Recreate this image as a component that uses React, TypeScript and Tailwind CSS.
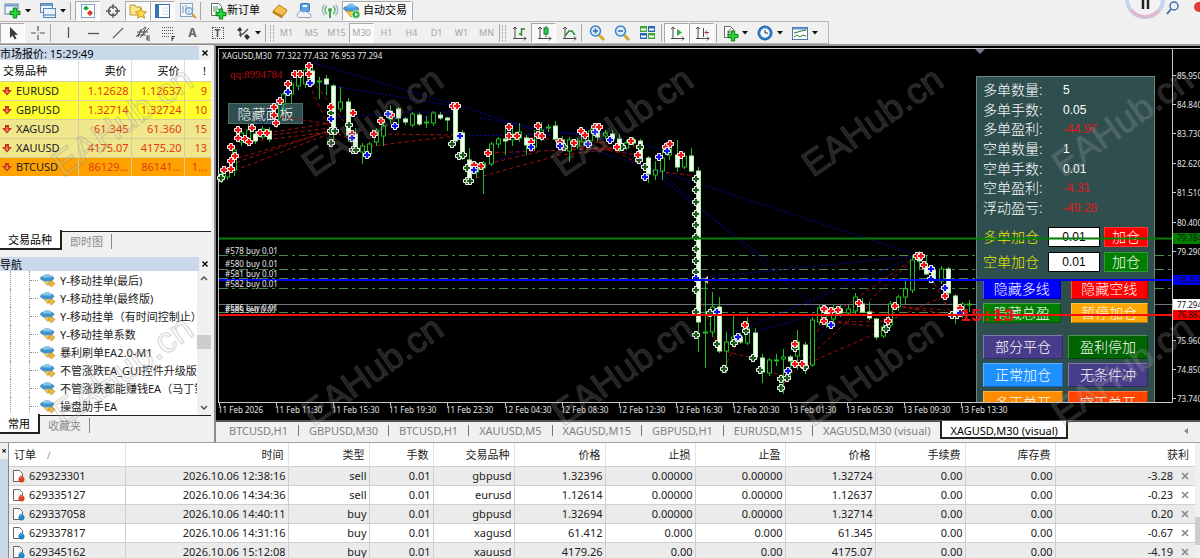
import type { ReactNode } from 'react'

type Side = 'sell' | 'buy'

interface Quote {
  symbol: string
  bid: string
  ask: string
  spread: string
  tone: string
}

interface Order {
  id: string
  time: string
  side: Side
  lots: string
  symbol: string
  open: string
  sl: string
  tp: string
  price: string
  profit: string
}

const quotes: Quote[] = [
  { symbol: 'EURUSD', bid: '1.12628', ask: '1.12637', spread: '9', tone: 'bg-[#ffff2e]' },
  { symbol: 'GBPUSD', bid: '1.32714', ask: '1.32724', spread: '10', tone: 'bg-[#ffff2e]' },
  { symbol: 'XAGUSD', bid: '61.345', ask: '61.360', spread: '15', tone: 'bg-[#f0e68c]' },
  { symbol: 'XAUUSD', bid: '4175.07', ask: '4175.20', spread: '13', tone: 'bg-[#f0e68c]' },
  { symbol: 'BTCUSD', bid: '86129...', ask: '86141...', spread: '1...', tone: 'bg-[#ffa200]' },
]

const experts = [
  'Y-移动挂单(最后)',
  'Y-移动挂单(最终版)',
  'Y-移动挂单（有时间控制止）',
  'Y-移动挂单系数',
  '暴利刷单EA2.0-M1',
  '不管涨跌EA_GUI控件升级版',
  '不管涨跌都能赚钱EA（马丁策略）',
  '操盘助手EA',
]

const orders: Order[] = [
  { id: '629323301', time: '2026.10.06 12:38:16', side: 'sell', lots: '0.01', symbol: 'gbpusd', open: '1.32396', sl: '0.00000', tp: '0.00000', price: '1.32724', profit: '-3.28' },
  { id: '629335127', time: '2026.10.06 14:34:36', side: 'sell', lots: '0.01', symbol: 'eurusd', open: '1.12614', sl: '0.00000', tp: '0.00000', price: '1.12637', profit: '-0.23' },
  { id: '629337058', time: '2026.10.06 14:40:11', side: 'buy', lots: '0.01', symbol: 'gbpusd', open: '1.32694', sl: '0.00000', tp: '0.00000', price: '1.32714', profit: '0.20' },
  { id: '629337817', time: '2026.10.06 14:31:16', side: 'buy', lots: '0.01', symbol: 'xagusd', open: '61.412', sl: '0.000', tp: '0.000', price: '61.345', profit: '-0.67' },
  { id: '629345162', time: '2026.10.06 15:12:08', side: 'buy', lots: '0.01', symbol: 'xauusd', open: '4179.26', sl: '0.00', tp: '0.00', price: '4175.07', profit: '-4.19' },
]

const chartTabs = ['BTCUSD,H1', 'GBPUSD,M30', 'BTCUSD,H1', 'XAUUSD,M5', 'XAGUSD,M15', 'GBPUSD,H1', 'EURUSD,M15', 'XAGUSD,M30 (visual)']

const stats = [
  { label: '多单数量:', value: '5' },
  { label: '多单手数:', value: '0.05' },
  { label: '多单盈利:', value: '-44.97', loss: true },
  { label: '空单数量:', value: '1' },
  { label: '空单手数:', value: '0.01' },
  { label: '空单盈利:', value: '-4.31', loss: true },
  { label: '浮动盈亏:', value: '-49.28', loss: true },
]

const timeLabels = [
  '11 Feb 2026', '11 Feb 11:30', '11 Feb 15:30', '11 Feb 19:30', '11 Feb 23:30', '12 Feb 04:30', '12 Feb 08:30',
  '12 Feb 12:30', '12 Feb 16:30', '12 Feb 20:30', '13 Feb 01:30', '13 Feb 05:30', '13 Feb 09:30', '13 Feb 13:30',
]

const priceLabels: [string, number][] = [
  ['85.950', 76], ['84.840', 105], ['83.730', 134], ['82.620', 164], ['81.510', 193], ['80.400', 223],
  ['79.290', 252], ['75.960', 341], ['74.850', 370], ['73.740', 399],
]

// x, high, low, body top, body bottom, 1 = falling bar (filled)
const candles: number[][] = [
  [221, 169, 183, 174, 180, 0], [227, 167, 180, 171, 177, 0], [234, 146, 176, 150, 170, 0], [241, 128, 146, 133, 142, 0],
  [248, 124, 144, 130, 139, 0], [255, 131, 144, 134, 141, 1], [262, 126, 139, 129, 137, 0], [269, 127, 142, 131, 139, 1],
  [276, 104, 128, 106, 121, 0], [283, 92, 112, 94, 104, 0], [291, 80, 104, 84, 94, 0], [298, 70, 90, 73, 86, 0],
  [305, 66, 88, 70, 84, 0], [312, 64, 86, 71, 83, 1], [319, 77, 99, 81, 82, 0], [326, 75, 95, 79, 84, 1],
  [333, 84, 144, 86, 128, 1], [340, 87, 112, 102, 109, 0], [348, 98, 142, 102, 135, 1], [355, 128, 153, 134, 152, 1],
  [362, 143, 164, 146, 152, 0], [369, 142, 158, 144, 154, 0], [376, 128, 146, 131, 142, 0], [383, 120, 146, 126, 136, 0],
  [390, 105, 124, 111, 119, 0], [398, 107, 124, 109, 118, 1], [405, 117, 125, 119, 122, 1], [412, 112, 127, 114, 125, 0],
  [419, 113, 126, 115, 124, 1], [426, 116, 128, 122, 123, 0], [433, 111, 126, 113, 123, 0], [440, 112, 120, 115, 118, 1],
  [447, 117, 131, 118, 120, 1], [455, 104, 144, 107, 141, 1], [462, 130, 160, 133, 157, 1], [469, 148, 182, 160, 180, 1],
  [476, 162, 178, 164, 172, 0], [483, 161, 194, 163, 168, 0], [491, 142, 166, 144, 164, 0], [498, 137, 148, 139, 144, 0],
  [505, 129, 155, 139, 141, 1], [512, 127, 146, 134, 140, 0], [519, 123, 142, 132, 138, 0], [526, 135, 155, 138, 145, 1],
  [534, 130, 151, 140, 147, 0], [541, 122, 141, 130, 138, 0], [548, 124, 132, 127, 128, 0], [555, 121, 142, 126, 139, 1],
  [562, 136, 151, 140, 149, 1], [569, 137, 162, 140, 151, 0], [577, 138, 149, 141, 146, 0], [583, 131, 146, 134, 142, 0],
  [590, 129, 147, 131, 141, 0], [597, 124, 141, 128, 137, 1], [605, 130, 139, 133, 136, 0], [612, 130, 142, 134, 139, 1],
  [619, 134, 152, 139, 147, 1], [626, 140, 150, 143, 148, 0], [633, 137, 146, 140, 143, 1], [640, 139, 161, 141, 159, 1],
  [648, 156, 183, 158, 174, 1], [655, 161, 180, 170, 175, 0], [662, 150, 180, 158, 171, 0], [669, 141, 160, 145, 155, 0],
  [677, 140, 172, 155, 167, 1], [684, 152, 169, 156, 167, 0], [691, 148, 172, 156, 171, 1], [698, 167, 352, 171, 322, 1],
  [705, 280, 368, 332, 333, 0], [712, 292, 337, 307, 332, 0], [719, 297, 353, 307, 351, 1], [726, 332, 373, 342, 351, 0],
  [733, 315, 346, 337, 342, 0], [740, 333, 344, 337, 342, 1], [747, 317, 345, 328, 343, 0], [755, 328, 360, 333, 357, 1],
  [762, 354, 383, 358, 372, 1], [769, 358, 376, 360, 373, 0], [776, 354, 366, 360, 361, 0], [783, 349, 394, 357, 359, 0],
  [790, 355, 380, 357, 361, 1], [797, 330, 370, 342, 356, 0], [805, 342, 374, 345, 369, 1], [812, 317, 367, 320, 365, 0],
  [819, 305, 325, 308, 322, 0], [826, 306, 328, 309, 315, 1], [833, 305, 323, 309, 319, 0], [840, 305, 317, 309, 313, 1],
  [848, 305, 316, 309, 313, 0], [855, 293, 314, 297, 311, 0], [862, 298, 313, 304, 312, 1], [869, 302, 320, 312, 318, 1],
  [876, 318, 340, 319, 337, 1], [883, 324, 338, 327, 336, 0], [890, 301, 328, 304, 325, 0], [898, 295, 311, 297, 307, 0],
  [905, 278, 304, 289, 297, 0], [912, 256, 293, 260, 290, 0], [919, 251, 270, 254, 261, 1], [926, 256, 275, 267, 274, 1],
  [933, 266, 283, 270, 280, 1], [941, 266, 284, 269, 281, 0], [948, 267, 296, 269, 293, 1], [955, 294, 324, 296, 315, 1],
  [962, 302, 318, 304, 313, 0], [969, 300, 312, 304, 305, 0],
]

const redMarks: number[][] = [
  [224, 170], [231, 161], [231, 147], [235, 156], [231, 169], [238, 130], [238, 138], [245, 139], [249, 142], [252, 128],
  [260, 133], [267, 133], [276, 123], [274, 107], [274, 115], [280, 101], [288, 84], [295, 74], [300, 74], [309, 66],
  [309, 74], [331, 107], [353, 113], [352, 134], [374, 134], [381, 121], [391, 115], [453, 106], [457, 106], [474, 165],
  [481, 166], [488, 153], [509, 127], [509, 136], [517, 136], [531, 142], [538, 126], [538, 135], [542, 136], [560, 142],
  [574, 143], [581, 131], [585, 135], [595, 127], [599, 127], [617, 147], [631, 141], [638, 155], [681, 155], [666, 147],
  [670, 144], [745, 325], [795, 344], [795, 364], [802, 364], [824, 309], [831, 311], [838, 310], [824, 321], [859, 303],
  [895, 306], [888, 321], [917, 256], [921, 256], [924, 265], [945, 296], [960, 308],
]

const blueMarks: number[][] = [
  [288, 92], [310, 83], [331, 119], [352, 138], [367, 155], [388, 114], [395, 126], [460, 136], [474, 170], [531, 147],
  [560, 146], [588, 144], [595, 132], [610, 140], [645, 177], [659, 157], [667, 151], [696, 278], [717, 312], [738, 337],
  [788, 371], [831, 325], [931, 269], [931, 279], [945, 288], [960, 313],
]

const greenMarks: number[][] = [
  [221, 178], [331, 113], [331, 131], [335, 131], [331, 143], [349, 125], [353, 150], [356, 150], [452, 144], [459, 156],
  [463, 155], [467, 168], [467, 181], [470, 181], [564, 147], [622, 147], [640, 147], [639, 160], [645, 167], [696, 179],
  [696, 190], [696, 202], [696, 214], [696, 225], [696, 237], [696, 249], [696, 261], [696, 272], [696, 290], [696, 312],
  [696, 335], [710, 313], [717, 344], [724, 369], [734, 343], [753, 358], [760, 370], [781, 379], [781, 388], [787, 378],
  [746, 331], [795, 348], [805, 367], [886, 329], [952, 315], [957, 315],
]

const markPath = 'M-1.5-3.500h3v2h2v3h-2v2h-3v-2h-2v-3h2z'

const redTrends =
  'M223 167L331 130M231 160L331 131M238 139L331 128M246 142L331 132M260 134L331 123M228 173L331 133M274 116L331 124M309 84L331 131M312 80L349 128M331 131L353 140M356 148L455 136M374 134L455 135M474 167L538 152M488 153L617 148M476 178L560 155L640 146M517 137L640 145M566 148L617 148M560 143L638 155M585 135L645 167M645 170L697 176M698 290L717 345M719 350L753 358M724 369L745 325M760 370L783 375M783 385L824 321M787 378L917 256M802 366L886 329M824 321L888 328M831 322L888 321M838 311L917 256M859 303L888 321M895 306L952 315M888 321L945 296M895 306L945 310M924 265L952 315'

const blueTrends =
  'M231 160L309 72M246 139L295 74M267 132L288 92M310 62L453 104M310 82L453 106M331 118L388 114M395 118L455 116M457 105L917 255M395 112L457 112M460 136L595 133M474 170L531 147M480 118L610 140M595 132L667 151M610 140L770 262M640 155L820 312M698 278L917 256M717 340L917 256M738 337L824 312M788 371L831 325M917 256L945 288M931 279L960 313'

const Svg = ({ children, size = 18 }: { children: ReactNode; size?: number }) => (
  <svg viewBox="0 0 18 18" width={size} height={size} fill="none" aria-hidden="true" className="shrink-0">
    {children}
  </svg>
)

const PlusShape = ({ x, y }: { x: number; y: number }) => (
  <path
    transform={`translate(${x} ${y})`}
    d="M-1.7-5h3.4v3.3h3.3v3.4h-3.3v3.3h-3.4v-3.3h-3.3v-3.4h3.3z"
    fill="#27d33a"
    stroke="#0b7d16"
  />
)

const Caret = () => (
  <svg viewBox="0 0 6 4" width="6" height="4" aria-hidden="true" className="shrink-0">
    <path d="M0 0h6L3 3.5z" fill="#111" />
  </svg>
)

const icons = {
  newChart: <Svg><rect x="1" y="2" width="13" height="10" fill="#eef4fb" stroke="#64809f" /><path d="M1 3.5h13" stroke="#6f9bc8" strokeWidth="2" /><PlusShape x={11} y={11} /></Svg>,
  profiles: <Svg><rect x="1.500" y="1.500" width="12" height="9" fill="#eaf3fc" stroke="#5b86b2" /><path d="M2 3h11" stroke="#6d9ccd" strokeWidth="2" /><rect x="4.500" y="6.500" width="12" height="9" fill="#eaf3fc" stroke="#5b86b2" /><path d="M5 13h11" stroke="#8fb4da" strokeWidth="2" /></Svg>,
  market: <Svg><rect x="2.500" y="2.500" width="13" height="13" fill="#fff" stroke="#7fa8d0" /><path d="M4 6.500l3-3 3 3-3 2z" fill="#18a838" /><path d="M8 11l3-3 3 3-3 3z" fill="#e33425" /></Svg>,
  crosshair: <Svg><circle cx="9" cy="9" r="4.500" stroke="#555" strokeWidth="1.500" /><path d="M9 2v5M9 11v5M2 9h5M11 9h5" stroke="#555" strokeWidth="1.300" /></Svg>,
  favourites: <Svg><path d="M1 3h5l1 2h5v8H1z" fill="#f8e58c" stroke="#b79a37" /><path d="M12 6l1.700 3.500 3.800.4-2.800 2.500.8 3.800L12 14.300l-3.500 1.900.8-3.800-2.800-2.500 3.800-.4z" fill="#ffd54a" stroke="#b8860b" strokeWidth=".8" /></Svg>,
  terminal: <Svg><rect x="1.500" y="2.500" width="14" height="13" fill="#fff" stroke="#3b71a8" /><rect x="2" y="3" width="3" height="12" fill="#2f74b5" /><path d="M8 6h6M8 9h6M8 12h6" stroke="#c9d8e8" /></Svg>,
  tester: <Svg><rect x="1.500" y="1.500" width="12" height="13" fill="#f3f7fb" stroke="#86a2bf" /><path d="M4 4v7M7 3v6M10 5v6" stroke="#7793ae" /><circle cx="10" cy="9" r="3.500" fill="#cfe4f9aa" stroke="#5d8fc4" /><path d="M13 12l4 4" stroke="#d79b2e" strokeWidth="2" /></Svg>,
  newOrder: <Svg><path d="M2.500 1.500h7l3 3v9h-10z" fill="#fff" stroke="#6b6b6b" /><path d="M4 5h5M4 7h6M4 9h4" stroke="#4b9a55" /><PlusShape x={12} y={12} /></Svg>,
  meta: <Svg><path d="M2 9l6-6 8 5-5 6z" fill="#f4c04a" stroke="#b07a12" /><path d="M2 9l9 5v2l-9-5z" fill="#c98a1b" stroke="#a26e10" strokeWidth=".6" /><path d="M11 14l5-6v2l-5 6z" fill="#dfa130" /></Svg>,
  cloud: <Svg><rect x="4.500" y="1.500" width="9" height="8" rx="1" fill="#5aa5ea" stroke="#3077b8" /><path d="M7 4h4" stroke="#fff" strokeWidth="2" /><path d="M2.500 15.500a2.500 2.500 0 010-4.500 3 3 0 015-1 3.500 3.500 0 015 1.500 2.500 2.500 0 012 4z" fill="#eef4fa" stroke="#8aa3bd" /></Svg>,
  signals: <Svg><circle cx="9" cy="8" r="2" fill="#3aa34c" /><path d="M9 9v7" stroke="#3aa34c" strokeWidth="2" /><path d="M6 12a5 5 0 010-8M12 12a5 5 0 000-8" stroke="#57b966" strokeWidth="1.500" /><path d="M3.500 13.500a8 8 0 010-11M14.500 13.500a8 8 0 000-11" stroke="#9db3c8" strokeWidth="1.300" /></Svg>,
  auto: <Svg><path d="M2 8l6 7 6-3 2-5z" fill="#f3c744" stroke="#b98d18" strokeWidth=".7" /><ellipse cx="8" cy="6.500" rx="7.500" ry="2.500" fill="#4b9edd" stroke="#2a74ae" strokeWidth=".7" /><path d="M4 5.500a4 4 0 018 0z" fill="#79bdec" /><circle cx="13" cy="12.500" r="4" fill="#25b33a" stroke="#fff" strokeWidth=".7" /><path d="M12 10.500l3 2-3 2z" fill="#fff" /></Svg>,
  cursor: <Svg><path d="M6 3v11l2.700-2.500 2 4 1.800-1-2-3.800H14z" fill="#3a3a3a" /></Svg>,
  cross: <Svg><path d="M9 2v5M9 11v5M2 9h5M11 9h5" stroke="#555" strokeWidth="1.200" /><path d="M9 9h1" stroke="#555" /></Svg>,
  vline: <Svg><path d="M9.500 3v11" stroke="#555" strokeWidth="1.300" /></Svg>,
  hline: <Svg><path d="M4 9.500h11" stroke="#555" strokeWidth="1.300" /></Svg>,
  trend: <Svg><path d="M4 14L14 4" stroke="#666" strokeWidth="1.200" /></Svg>,
  channel: <Svg><path d="M2 13L11 3M6 14L15 4M3 8h11M3 11h9M7 5l-3 8M12 3l-4 9" stroke="#555" /><path d="M13 12h3M13 14h3M13 16h3M13 12v4" stroke="#333" strokeWidth=".9" /></Svg>,
  fibo: <Svg><path d="M3 3.500h12M3 6.500h12M3 9.500h12M3 12.500h8" stroke="#555" strokeDasharray="1 1" /><path d="M13 12v5M13 12.500h3M13 14.500h2" stroke="#333" /></Svg>,
  arrows: <Svg><path d="M3 6l3-3 2 3-2 2zM10 12l3-2 3 3-3 3z" fill="#333" /><path d="M5 11l4-1 5-5M6 8l1 5" stroke="#444" strokeWidth="1.300" /></Svg>,
  bars: <Svg><path d="M5 3v12M3 5l2-2 2 2M3 14.500h13M14 12.500l2 2-2 2" stroke="#4b4b4b" /><path d="M11.500 4v8M9 10h2M12 5h3" stroke="#22862c" strokeWidth="1.400" /></Svg>,
  candles: <Svg><path d="M5 3v12M3 5l2-2 2 2M3 14.500h13M14 12.500l2 2-2 2" stroke="#4b4b4b" /><path d="M11 2v11" stroke="#14782a" /><rect x="9" y="4" width="4" height="6" fill="#29d04b" stroke="#14782a" /></Svg>,
  line: <Svg><path d="M5 3v12M3 5l2-2 2 2M3 14.500h13M14 12.500l2 2-2 2" stroke="#4b4b4b" /><path d="M5 12l4-5h3l3 4" stroke="#22862c" strokeWidth="1.300" /></Svg>,
  zoomIn: <Svg><path d="M11 11l5 5" stroke="#d8a62b" strokeWidth="3" /><circle cx="7.500" cy="7" r="5" fill="#d9ecfd" stroke="#3b83c8" strokeWidth="1.500" /><path d="M5 7h5M7.500 4.500v5" stroke="#2d6eb0" strokeWidth="1.500" /></Svg>,
  zoomOut: <Svg><path d="M11 11l5 5" stroke="#d8a62b" strokeWidth="3" /><circle cx="7.500" cy="7" r="5" fill="#d9ecfd" stroke="#3b83c8" strokeWidth="1.500" /><path d="M5 7h5" stroke="#2d6eb0" strokeWidth="1.500" /></Svg>,
  tile: <Svg><rect x="2" y="2" width="7" height="6" fill="#3ea935" /><rect x="10" y="2" width="7" height="6" fill="#2f62bd" /><rect x="2" y="9" width="7" height="6" fill="#2f62bd" /><rect x="10" y="9" width="7" height="6" fill="#3ea935" /><path d="M3 5.500h5M11 5.500h5M3 12.500h5M11 12.500h5" stroke="#fff" strokeWidth="2" /></Svg>,
  scroll: <Svg><path d="M5 3v12M3 5l2-2 2 2M3 14.500h13M14 12.500l2 2-2 2" stroke="#4b4b4b" /><path d="M9 5l5 3.500L9 12z" fill="#2fae45" /></Svg>,
  shift: <Svg><path d="M5 3v12M3 5l2-2 2 2M3 14.500h13M14 12.500l2 2-2 2M10.500 4v9" stroke="#4b4b4b" /><path d="M16 8.500h-4M14 6.500l-2 2 2 2" stroke="#a33" /></Svg>,
  indicators: <Svg><path d="M3.500 2.500h6l3 3v8h-9z" fill="#fff" stroke="#666" /><path d="M6 11c2 0 1-6 4-6M6 8h4" stroke="#555" /><PlusShape x={12} y={12} /></Svg>,
  periods: <Svg><circle cx="9" cy="9" r="7" fill="#2f7fd0" stroke="#1f5c9e" /><circle cx="9" cy="9" r="4.700" fill="#f3f9ff" /><path d="M9 6v3h3" stroke="#333" /></Svg>,
  templates: <Svg><rect x="1.500" y="3.500" width="15" height="12" fill="#fff" stroke="#4b7ba9" /><path d="M2 4.500h14" stroke="#5e97cd" strokeWidth="2" /><path d="M3 9l4-1 3-1 5-1M3 13l3-2 3 2 3-2 3 1" stroke="#356f3f" /></Svg>,
}

interface ToolProps {
  label: string
  children: ReactNode
  pressed?: boolean
  caret?: boolean
}

const Tool = ({ label, children, pressed, caret }: ToolProps) => (
  <button
    type="button"
    aria-label={label}
    className={`flex h-5 shrink-0 items-center justify-center gap-[3px] ${caret ? 'w-[35px]' : 'w-[25px]'} ${
      pressed ? 'border border-[#a9a9a9] border-r-white border-b-white bg-[#f9f9f9]' : ''
    }`}
  >
    {children}
    {caret && <Caret />}
  </button>
)

const Divider = () => <span className="h-[18px] w-px shrink-0 bg-[#a8a8a8]" />

const Grip = () => <span className="h-4 w-1 shrink-0 border-x border-dotted border-[#999]" />

const Toolbars = () => (
  <header className="relative shrink-0 overflow-hidden bg-[#f0f0f0]">
    <div className="flex h-[21px] items-center">
      <Tool label="新图表" caret>{icons.newChart}</Tool>
      <Tool label="配置文件" caret>{icons.profiles}</Tool>
      <Divider />
      <div className="ml-1 flex items-center">
        <Tool label="市场报价" pressed>{icons.market}</Tool>
        <Tool label="数据窗口">{icons.crosshair}</Tool>
        <Tool label="导航" pressed>{icons.favourites}</Tool>
        <Tool label="终端" pressed>{icons.terminal}</Tool>
        <Tool label="策略测试">{icons.tester}</Tool>
      </div>
      <Divider />
      <div className="ml-2 flex items-center">
        <button type="button" className="flex h-5 w-[58px] items-center text-[11px] whitespace-nowrap text-black">
          {icons.newOrder}
          新订单
        </button>
        <Tool label="编辑器">{icons.meta}</Tool>
        <Tool label="云服务">{icons.cloud}</Tool>
        <Tool label="信号">{icons.signals}</Tool>
        <button
          type="button"
          className="flex h-5 w-[70px] items-center gap-[2px] border border-[#a9a9a9] border-r-white border-b-white bg-[#f9f9f9] text-[11px] whitespace-nowrap text-black"
        >
          {icons.auto}
          自动交易
        </button>
      </div>
      <Divider />
    </div>
    <div className="flex h-[23px] w-[829px] items-center border-y border-r border-[#b5b5b5]">
      <Tool label="光标" pressed>{icons.cursor}</Tool>
      <Tool label="十字准线">{icons.cross}</Tool>
      <Divider />
      <div className="ml-1 flex items-center">
        <Tool label="垂直线">{icons.vline}</Tool>
        <Tool label="水平线">{icons.hline}</Tool>
        <Tool label="趋势线">{icons.trend}</Tool>
        <Tool label="等距通道">{icons.channel}</Tool>
        <Tool label="斐波那契">{icons.fibo}</Tool>
        <Tool label="文本"><span className="text-[12px] font-bold text-[#666]">A</span></Tool>
        <Tool label="文本标签">
          <span className="flex size-3 items-center justify-center border border-dotted border-[#555] text-[10px] leading-none font-bold text-[#555]">T</span>
        </Tool>
        <Tool label="箭头" caret>{icons.arrows}</Tool>
      </div>
      <Divider />
      <div className="ml-1 flex items-center">
        <Grip />
        {['M1', 'M5', 'M15', 'M30', 'H1', 'H4', 'D1', 'W1', 'MN'].map((frame) => (
          <button
            key={frame}
            type="button"
            className={`h-5 w-[25px] text-[9px] text-[#a5a5a5] ${
              frame === 'M30' ? 'border border-[#a9a9a9] border-r-white border-b-white bg-[#f9f9f9]' : ''
            }`}
          >
            {frame}
          </button>
        ))}
      </div>
      <Divider />
      <div className="ml-[2px] flex items-center">
        <Grip />
        <Tool label="柱状图">{icons.bars}</Tool>
        <Tool label="蜡烛图" pressed>{icons.candles}</Tool>
        <Tool label="折线图">{icons.line}</Tool>
      </div>
      <Divider />
      <div className="mx-[2px] flex items-center">
        <Tool label="放大">{icons.zoomIn}</Tool>
        <Tool label="缩小">{icons.zoomOut}</Tool>
        <Tool label="平铺">{icons.tile}</Tool>
      </div>
      <Divider />
      <div className="mx-[2px] flex items-center">
        <Tool label="自动滚动" pressed>{icons.scroll}</Tool>
        <Tool label="图表平移" pressed>{icons.shift}</Tool>
      </div>
      <Divider />
      <Tool label="指标" caret>{icons.indicators}</Tool>
      <Tool label="周期" caret>{icons.periods}</Tool>
      <Tool label="模板" caret>{icons.templates}</Tool>
    </div>
    <div className="absolute top-0 right-0 h-5 w-20">
      <svg viewBox="0 0 80 20" width="80" height="20" fill="none" aria-hidden="true">
        <circle cx="25" cy="-1" r="18" fill="#f4f1f5" stroke="#bfd4ee" strokeWidth="4" />
        <path d="M11 10a18 18 0 0028 0" stroke="#e3b8c6" strokeWidth="3" />
        <path d="M23 0v9M28 0v9" stroke="#222" strokeWidth="2.500" />
        <circle cx="54" cy="6" r="4" stroke="#3f6fb0" strokeWidth="1.500" />
        <path d="M51 9l-4 5" stroke="#3f6fb0" strokeWidth="2" />
        <circle cx="79" cy="7" r="5" fill="#e23b3b" />
      </svg>
    </div>
  </header>
)

const PaneTitle = ({ children }: { children: ReactNode }) => (
  <div className="flex h-[14px] shrink-0 items-center justify-between bg-[#c9d9ea] text-[11px] leading-none text-black">
    <h2>{children}</h2>
    <button type="button" aria-label="关闭" className="flex h-full w-3 items-center justify-center bg-[#f0f0f0]">
      <svg viewBox="0 0 6 6" width="6" height="6" aria-hidden="true">
        <path d="M.5.5l5 5M5.500.5l-5 5" stroke="#000" strokeWidth="1.400" />
      </svg>
    </button>
  </div>
)

const PaneTabs = ({ active, other }: { active: string; other: string }) => (
  <div className="flex h-5 shrink-0 items-start text-[11px] leading-none">
    <button type="button" className="-mt-px h-5 border-r-2 border-b-2 border-[#222] bg-white px-2 text-black">{active}</button>
    <button type="button" className="h-5 flex-1 border-t border-[#222] text-left text-[#8a8a8a]">
      <span className="ml-2 border-r border-[#888] pr-2">{other}</span>
    </button>
  </div>
)

const MarketWatch = () => (
  <section className="flex h-[205px] shrink-0 flex-col">
    <PaneTitle>市场报价: 15:29:49</PaneTitle>
    <div className="min-h-0 flex-1 bg-white">
      <table className="w-full table-fixed border-collapse text-right text-[11px] leading-none">
        <colgroup>
          <col className="w-[78px]" />
          <col className="w-[53px]" />
          <col className="w-[53px]" />
          <col />
        </colgroup>
        <thead>
          <tr className="h-[21px] text-black">
            <th className="pl-[3px] text-left font-normal">交易品种</th>
            <th className="border-l border-[#ddd] pr-1 font-normal">卖价</th>
            <th className="border-l border-[#ddd] pr-1 font-normal">买价</th>
            <th className="border-l border-[#ddd] pr-[5px] font-normal">!</th>
          </tr>
        </thead>
        <tbody>
          {quotes.map((quote) => (
            <tr key={quote.symbol} className={`h-[19px] border-t border-[#d5cf9a] text-[#e23c10] ${quote.tone}`}>
              <td className="text-left text-[#222]">
                <span className="flex items-center gap-1 pl-[2px]">
                  <svg viewBox="0 0 10 10" width="10" height="10" aria-hidden="true">
                    <path d="M3 1h4v3h3L5 9.500 0 4h3z" fill="#c8321c" />
                    <path d="M4.500 3h1v2.500h1.500L5 7.500 3 5.500h1.500z" fill="#ff9a70" />
                  </svg>
                  {quote.symbol}
                </span>
              </td>
              <td className="border-l border-[#d5cf9a] pr-[2px]">{quote.bid}</td>
              <td className="border-l border-[#d5cf9a] pr-[2px]">{quote.ask}</td>
              <td className="border-l border-[#d5cf9a] pr-1">{quote.spread}</td>
            </tr>
          ))}
        </tbody>
      </table>
    </div>
    <PaneTabs active="交易品种" other="即时图" />
  </section>
)

const Navigator = () => (
  <section className="flex min-h-0 flex-1 flex-col">
    <PaneTitle>导航</PaneTitle>
    <div className="flex min-h-0 flex-1 bg-white">
      <ul className="min-w-0 flex-1 overflow-hidden pl-[10px] text-[11px] leading-none text-[#222]">
        {experts.map((name) => (
          <li key={name} className="flex h-[18px] items-center border-l border-dotted border-[#999] pl-[18px] whitespace-nowrap">
            <span className="flex h-full items-center border-l border-dotted border-[#999]">
              <span className="w-2 border-t border-dotted border-[#999]" />
            </span>
            <svg viewBox="0 0 18 16" width="16" height="14" aria-hidden="true" className="mr-1 ml-[2px] shrink-0">
              <path d="M3 8l5 6 4-1 2-5z" fill="#e9cb6d" stroke="#a8893a" strokeWidth=".6" />
              <ellipse cx="8" cy="6" rx="8" ry="3.500" fill="#3f93cd" />
              <path d="M3 5a5 4 0 0110 0z" fill="#86c5ea" />
              <path d="M13 9l4 3-4 4-4-4z" fill="#f0b93a" stroke="#a97a1c" strokeWidth=".7" />
            </svg>
            {name}
          </li>
        ))}
      </ul>
      <div className="flex w-[14px] shrink-0 flex-col items-center justify-between bg-[#f0f0f0] py-[5px]">
        <svg viewBox="0 0 8 5" width="8" height="5" fill="none" aria-hidden="true"><path d="M1 4l3-3 3 3" stroke="#555" strokeWidth="1.500" /></svg>
        <span className="mt-[54px] h-[14px] w-full bg-[#cdcdcd]" />
        <span className="flex-1" />
        <svg viewBox="0 0 8 5" width="8" height="5" fill="none" aria-hidden="true"><path d="M1 1l3 3 3-3" stroke="#555" strokeWidth="1.500" /></svg>
      </div>
    </div>
    <PaneTabs active="常用" other="收藏夹" />
  </section>
)

const PanelButton = ({ children, tone }: { children: ReactNode; tone: string }) => (
  <button
    type="button"
    className={`flex-1 overflow-hidden border border-t-white/30 border-r-black/30 border-b-black/30 border-l-white/30 text-[14px] leading-none font-light whitespace-nowrap text-white ${tone}`}
  >
    {children}
  </button>
)

const LotRow = ({ id, label, tone }: { id: string; label: string; tone: string }) => (
  <div className="flex h-5 items-center">
    <label htmlFor={id} className="w-[65px] text-[14px] leading-none font-light text-[#e8e800]">{label}</label>
    <input
      id={id}
      type="text"
      defaultValue="0.01"
      className="h-5 w-[52px] border border-black bg-white text-center font-['Liberation_Sans',sans-serif] text-[12px] text-black"
    />
    <button type="button" className={`ml-1 h-5 w-11 border border-white/20 text-[14px] leading-none font-light text-white ${tone}`}>
      加仓
    </button>
  </div>
)

const TradePanel = () => (
  <form className="absolute top-[30px] left-[760px] h-[326px] w-[179px] overflow-hidden border border-b-0 border-[#6d8585] bg-[#2f4f4f] px-[6px] pt-1">
    <dl className="flex h-[136px] flex-col justify-between font-light text-white">
      {stats.map((stat) => (
        <div key={stat.label} className="flex h-[18px] items-center leading-none">
          <dt className="w-20 text-[14px]">{stat.label}</dt>
          <dd className={`font-['Liberation_Sans',sans-serif] text-[12px] font-normal ${stat.loss ? 'text-[#e01818]' : ''}`}>{stat.value}</dd>
        </div>
      ))}
    </dl>
    <div className="mt-[10px] flex flex-col gap-[5px]">
      <LotRow id="long-lots" label="多单加仓" tone="bg-[#f00]" />
      <LotRow id="short-lots" label="空单加仓" tone="bg-[#008000]" />
    </div>
    <div className="mt-[7px] flex h-5 gap-[10px]">
      <PanelButton tone="bg-[#00f]">隐藏多线</PanelButton>
      <PanelButton tone="bg-[#f00]">隐藏空线</PanelButton>
    </div>
    <div className="mt-1 flex h-5 gap-[10px]">
      <PanelButton tone="bg-[#008000]">隐藏总盈</PanelButton>
      <PanelButton tone="bg-[#ffa500]">暂停加仓</PanelButton>
    </div>
    <div className="mt-3 flex flex-col gap-1">
      <div className="flex h-6 gap-[5px]">
        <PanelButton tone="bg-[#483d8b]">部分平仓</PanelButton>
        <PanelButton tone="bg-[#006400]">盈利停加</PanelButton>
      </div>
      <div className="flex h-6 gap-[5px]">
        <PanelButton tone="bg-[#1e90ff]">正常加仓</PanelButton>
        <PanelButton tone="bg-[#483d8b]">无条件冲</PanelButton>
      </div>
      <div className="flex h-6 gap-[5px]">
        <PanelButton tone="bg-[#ff8c00]">多正单开</PanelButton>
        <PanelButton tone="bg-[#ff4500]">空正单开</PanelButton>
      </div>
    </div>
  </form>
)

const Marks = ({ points, fill }: { points: number[][]; fill: string }) => (
  <g fill={fill} stroke="#f4f4f4" strokeWidth="1">
    {points.map(([x, y], i) => (
      <path key={i} d={markPath} transform={`translate(${x} ${y})`} />
    ))}
  </g>
)

const PriceChart = () => (
  <svg
    viewBox="216 46 984 374"
    width="984"
    height="374"
    fill="none"
    role="img"
    aria-label="XAGUSD M30"
    className="pointer-events-none absolute top-0 left-0"
  >
    <path d="M218.500 402.500V48.500H1200M1172.500 48V402.500H218" stroke="#c8c8c8" />
    <path d="M975 49h10l-5 5z" fill="#778" />
    <g stroke="#4d8a4d" strokeDasharray="9 4 3 4">
      <path d="M219 255.500H976M1155 255.500h17M219 269.500H976M1155 269.500h17M219 278.500H976M219 288.500H976M1155 288.500h17M219 312.500H976" />
    </g>
    <path d="M219 304.500H976M1155 304.500h17" stroke="#6c7680" />
    <path d={redTrends} stroke="#a01010" strokeDasharray="4 3" />
    <path d={blueTrends} stroke="#0808a8" strokeDasharray="2 2" />
    {candles.map(([x, high, low, top, bottom, down]) => (
      <g key={x}>
        <path d={`M${x + 0.5} ${high}V${low}`} stroke="#1fc01f" />
        <rect x={x - 1.5} y={top} width="4" height={bottom - top} fill={down ? '#f4fff0' : '#000'} stroke={down ? '#a6f0a0' : '#1fc01f'} />
      </g>
    ))}
    <Marks points={greenMarks} fill="#1c5a1c" />
    <Marks points={redMarks} fill="#f01414" />
    <Marks points={blueMarks} fill="#1414f0" />
    <path d="M703 280l5-4v8z" fill="#e8c890" />
    <path d="M219 238.500H1172" stroke="#007f00" strokeWidth="2" />
    <path d="M219 280H1172" stroke="#0000f0" strokeWidth="2" />
    <path d="M219 315H1172" stroke="#f01010" strokeWidth="2" />
    <g fill="#e4e4e4" fontSize="8">
      <text x="222" y="59">XAGUSD,M30&#160; 77.322 77.432 76.953 77.294</text>
      <text x="225" y="254">#578 buy 0.01</text>
      <text x="225" y="267">#580 buy 0.01</text>
      <text x="225" y="277">#581 buy 0.01</text>
      <text x="225" y="287">#582 buy 0.01</text>
      <text x="225" y="311">#586 buy 0.01</text>
      <text x="225" y="313">#585 sell 0.01</text>
      {timeLabels.map((label, i) => (
        <text key={label} x={218 + Math.round(i * 57.1)} y="413">{label}</text>
      ))}
      {priceLabels.map(([label, y]) => (
        <text key={label} x="1177" y={y + 3}>{label}</text>
      ))}
    </g>
    <path d={timeLabels.map((_, i) => `M${219.5 + Math.round(i * 57.1)} 403v3`).join('')} stroke="#c8c8c8" />
    <path d={priceLabels.map(([, y]) => `M1173 ${y - 0.5}h3`).join('')} stroke="#c8c8c8" />
    <rect x="1173" y="233" width="27" height="11" fill="#008000" />
    <rect x="1173" y="275" width="27" height="10" fill="#0000ff" />
    <rect x="1173" y="299" width="27" height="11" fill="#ffffff" />
    <rect x="1173" y="310" width="27" height="10" fill="#ff0000" />
    <g fontSize="8" fill="#111">
      <text x="1177" y="241">79.784</text>
      <text x="1177" y="283">78.255</text>
      <text x="1177" y="308">77.294</text>
      <text x="1177" y="318">76.887</text>
    </g>
    <text x="230" y="78" fontSize="11" fill="#b80c0c" fontFamily="Liberation Serif, serif">qq:8994784</text>
    <text x="960" y="321" fontSize="18" fontWeight="bold" fill="#e01414" fontFamily="Liberation Mono, monospace">15:13</text>
  </svg>
)

const ChartArea = () => (
  <main className="flex min-w-0 flex-1 flex-col border-t-2 border-[#9a9a9a] bg-[#f0f0f0]">
    <div className="relative min-h-0 flex-1 overflow-hidden bg-black">
      <button
        type="button"
        className="absolute top-[57px] left-3 h-[21px] w-[75px] border border-[#4d6b6b] bg-[#2f4f4f] text-[14px] leading-none font-light text-white"
      >
        隐藏面板
      </button>
      <TradePanel />
      <PriceChart />
    </div>
    <nav className="flex h-[22px] shrink-0 items-start border-t-2 border-[#555] pl-[3px] text-[11px] leading-none text-[#808080]">
      {chartTabs.map((tab, i) => (
        <a key={i} href={`#chart-${i}`} className={`mt-[3px] px-[10px] whitespace-nowrap ${i < 7 ? 'border-r border-[#777]' : ''}`}>
          {tab}
        </a>
      ))}
      <a href="#chart-8" aria-current="page" className="-mt-px h-[18px] border-2 border-t-0 border-[#222] bg-white px-2 pt-1 whitespace-nowrap text-black">
        XAGUSD,M30 (visual)
      </a>
      <svg viewBox="0 0 4 6" width="4" height="6" aria-hidden="true" className="mt-[6px] mr-3 ml-auto">
        <path d="M4 0v6L0 3z" fill="#888" />
      </svg>
    </nav>
  </main>
)

const Terminal = () => {
  const cell = 'border-r border-[#cfcfcf] pr-[2px]'

  return (
    <section className="flex h-[116px] shrink-0 overflow-hidden border-t border-[#a0a0a0] bg-[#f0f0f0]">
      <div className="w-2 shrink-0 bg-[#c9d9ea] text-center">
        <button type="button" aria-label="关闭终端" className="block h-4 w-full bg-[#f0f0f0] text-[9px] leading-4 font-bold text-black">×</button>
      </div>
      <div className="min-w-0 flex-1 border-l border-[#888] bg-white">
        <table className="w-full table-fixed border-collapse text-right text-[11px] leading-none text-[#222]">
          <colgroup>
            <col className="w-[116px]" />
            <col className="w-[163px]" />
            <col className="w-[81px]" />
            <col className="w-16" />
            <col className="w-[81px]" />
            <col className="w-[91px]" />
            <col className="w-[90px]" />
            <col className="w-[90px]" />
            <col className="w-[90px]" />
            <col className="w-[90px]" />
            <col className="w-[90px]" />
            <col />
          </colgroup>
          <thead>
            <tr className="h-[23px]">
              <th className="pl-[5px] text-left font-normal">
                订单 <span className="ml-2 text-[9px] text-[#888]">/</span>
              </th>
              {['时间', '类型', '手数', '交易品种', '价格', '止损', '止盈', '价格', '手续费', '库存费'].map((name, i) => (
                <th key={i} className="border-l border-[#e4e4e4] pr-1 font-normal">{name}</th>
              ))}
              <th className="border-l border-[#e4e4e4] pr-[6px] font-normal">获利</th>
            </tr>
          </thead>
          <tbody>
            {orders.map((order, i) => (
              <tr key={order.id} className={`h-[19px] border-t border-[#cfcfcf] ${i % 2 === 0 ? 'bg-[#ebebeb]' : 'bg-white'}`}>
                <td className="border-r border-[#cfcfcf] text-left">
                  <span className="flex items-center gap-1 pl-[3px]">
                    <svg viewBox="0 0 13 14" width="13" height="14" fill="none" aria-hidden="true">
                      <path d="M1.500 1.500h6l3 3v8h-9z" fill="#fff" stroke="#666" />
                      <circle cx="9.500" cy="10.500" r="3" fill={order.side === 'sell' ? '#d9431e' : '#1f86c4'} />
                      <circle cx="9" cy="8" r="1.500" fill={order.side === 'sell' ? '#e8694a' : '#4da6da'} />
                    </svg>
                    {order.id}
                  </span>
                </td>
                <td className={cell}>{order.time}</td>
                <td className={cell}>{order.side}</td>
                <td className={cell}>{order.lots}</td>
                <td className={cell}>{order.symbol}</td>
                <td className={cell}>{order.open}</td>
                <td className={cell}>{order.sl}</td>
                <td className={cell}>{order.tp}</td>
                <td className={cell}>{order.price}</td>
                <td className={cell}>0.00</td>
                <td className={cell}>0.00</td>
                <td>
                  <span className="flex items-center justify-end gap-2 pr-[6px]">
                    {order.profit}
                    <button type="button" aria-label={`平仓 ${order.id}`}>
                      <svg viewBox="0 0 8 8" width="8" height="8" aria-hidden="true" className="block">
                        <path d="M1 1l6 6M7 1L1 7" stroke="#888" strokeWidth="1.600" />
                      </svg>
                    </button>
                  </span>
                </td>
              </tr>
            ))}
          </tbody>
        </table>
      </div>
      <div className="w-[5px] shrink-0 bg-[#f0f0f0] pt-[74px]">
        <div className="h-7 bg-[#cdcdcd]" />
      </div>
    </section>
  )
}

const Watermark = () => (
  <svg className="pointer-events-none absolute inset-0 h-full w-full" aria-hidden="true">
    <g
      fontFamily="Liberation Sans, sans-serif"
      fontSize="36"
      fill="rgba(255,255,255,0.12)"
      stroke="rgba(120,120,120,0.25)"
      strokeWidth="1.500"
    >
      {[178, 427].map((y) =>
        [63, 313, 563, 813, 1063].map((x) => (
          <text key={`${x}-${y}`} transform={`translate(${x} ${y}) rotate(-35)`}>EAHub.cn</text>
        )),
      )}
    </g>
  </svg>
)

const App = () => (
  <div className="relative flex h-screen flex-col overflow-hidden bg-[#f0f0f0] font-['Noto_Sans','Noto_Sans_CJK_SC',sans-serif]">
    <Toolbars />
    <div className="flex min-h-0 flex-1">
      <aside className="flex w-[216px] shrink-0 flex-col gap-[6px] border-t border-r-2 border-[#8c8c8c] bg-[#f0f0f0] pt-px pr-[3px] pb-[7px]">
        <MarketWatch />
        <Navigator />
      </aside>
      <ChartArea />
    </div>
    <Terminal />
    <Watermark />
  </div>
)

export default App
